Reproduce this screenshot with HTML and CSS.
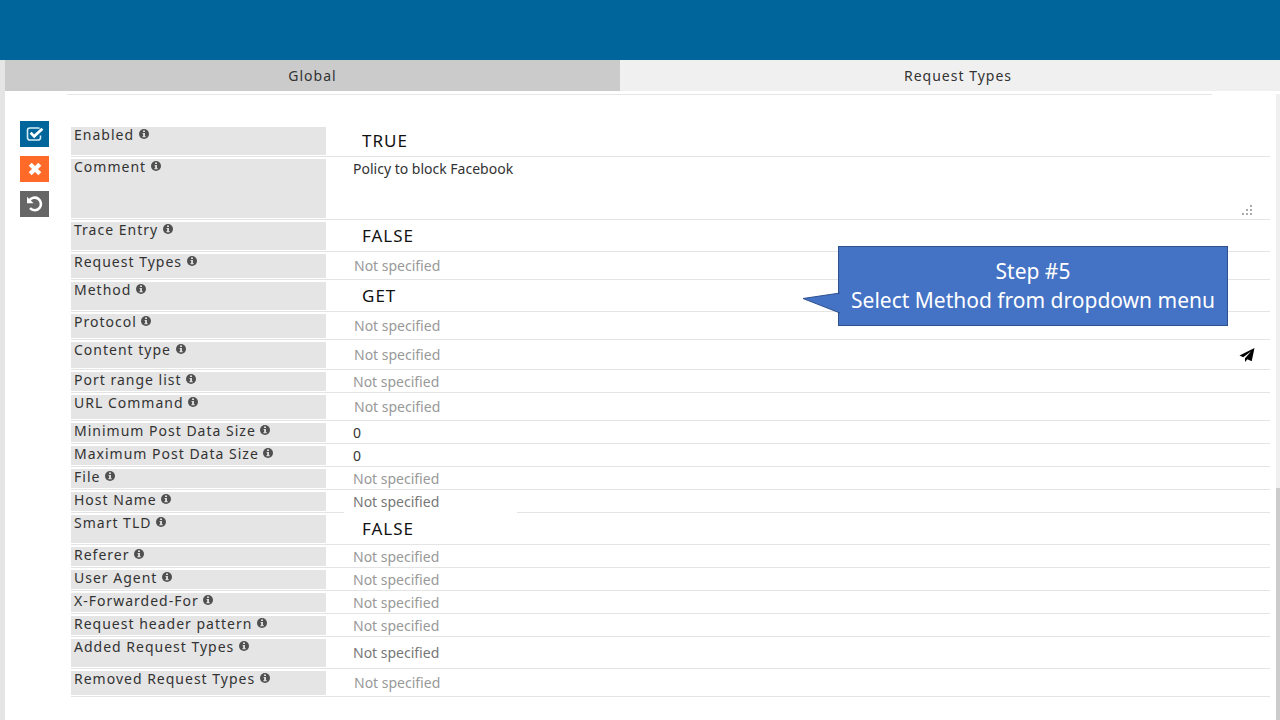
FILE: index.html
```html
<!DOCTYPE html>
<html lang="en">
<head>
  <meta charset="UTF-8" />
  <meta name="viewport" content="width=device-width, initial-scale=1.0"/>
  <title>Policy - Request Types</title>

  <link rel="stylesheet" href="styles.css">
</head>
<body>

  <!-- Shared icon -->
  <svg class="icon-defs" width="0" height="0" aria-hidden="true">
    <symbol id="info" viewBox="0 0 10 10">
      <circle cx="5" cy="5" r="5" fill="#505050"/>
      <path d="M4 1.6h2v1.4H4zM3.6 3.9H6v3.2h.6v1.1H3.5V7.1h.6V5h-.5z" fill="#dcdcdc"/>
    </symbol>
  </svg>

  <header class="top-bar"></header>

  <main class="page">
    <!-- Tabs -->
    <nav class="tabs">
      <button type="button" class="tab active">Global</button>
      <button type="button" class="tab">Request Types</button>
    </nav>

    <div class="content">
      <!-- Save / cancel / undo -->
      <div class="actions">
        <button type="button" class="action save" aria-label="Save">
          <svg width="20" height="18" viewBox="0 0 20 18" fill="none">
            <path d="M15.5 10.5v2.2a2.3 2.3 0 0 1-2.3 2.3H4.8a2.3 2.3 0 0 1-2.3-2.3V5.3A2.3 2.3 0 0 1 4.8 3h8.4q.8 0 1.4.4" stroke="#d5edf8" stroke-width="1.6"/>
            <path d="M5.6 7.8l3.6 3.6 8.2-7.6" stroke="#fff" stroke-width="2.8"/>
          </svg>
        </button>
        <button type="button" class="action cancel" aria-label="Cancel">
          <svg width="16" height="16" viewBox="0 0 16 16">
            <path d="M3.2 3.2l9.6 9.6M12.8 3.2l-9.6 9.6" stroke="#fff" stroke-width="4.2"/>
          </svg>
        </button>
        <button type="button" class="action undo" aria-label="Undo">
          <svg width="18" height="18" viewBox="0 0 18 18" fill="none">
            <path d="M3.2 5.8A6.3 6.3 0 1 1 4 13.2" stroke="#fff" stroke-width="2.6"/>
            <path d="M1 1.8v6.4h6.6z" fill="#fff"/>
          </svg>
        </button>
      </div>

      <!-- Policy form -->
      <form class="policy-form">
        <div class="row row-select">
          <label for="enabled">Enabled <svg class="info"><use href="#info"/></svg></label>
          <select id="enabled"><option>TRUE</option><option>FALSE</option></select>
        </div>
        <div class="row row-comment">
          <label for="comment">Comment <svg class="info"><use href="#info"/></svg></label>
          <textarea id="comment">Policy to block Facebook</textarea>
          <svg class="grip" width="12" height="10" viewBox="0 0 12 10" fill="#aaa">
            <path d="M9 0h2v2H9zM5 4h2v2H5zM9 4h2v2H9zM1 8h2v2H1zM5 8h2v2H5zM9 8h2v2H9z"/>
          </svg>
        </div>
        <div class="row row-select">
          <label for="trace">Trace Entry <svg class="info"><use href="#info"/></svg></label>
          <select id="trace"><option>FALSE</option><option>TRUE</option></select>
        </div>
        <div class="row row-list">
          <label for="requestTypes">Request Types <svg class="info"><use href="#info"/></svg></label>
          <input type="text" id="requestTypes" placeholder="Not specified" />
        </div>
        <div class="row row-select">
          <label for="method">Method <svg class="info"><use href="#info"/></svg></label>
          <select id="method"><option>GET</option><option>POST</option></select>
        </div>
        <div class="row row-list">
          <label for="protocol">Protocol <svg class="info"><use href="#info"/></svg></label>
          <input type="text" id="protocol" placeholder="Not specified" />
        </div>
        <div class="row row-send">
          <label for="contentType">Content type <svg class="info"><use href="#info"/></svg></label>
          <input type="text" id="contentType" placeholder="Not specified" />
          <button type="button" class="send" aria-label="Send">
            <svg width="16" height="14" viewBox="0 0 16 14">
              <path d="M15.5 0L.5 7.6l3.7 1.7L12.2 3.2 6 10.2V14l2.4-2.8 4.3 2.1z" fill="#000"/>
            </svg>
          </button>
        </div>
        <div class="row">
          <label for="portRange">Port range list <svg class="info"><use href="#info"/></svg></label>
          <input type="text" id="portRange" placeholder="Not specified" />
        </div>
        <div class="row row-list">
          <label for="urlCommand">URL Command <svg class="info"><use href="#info"/></svg></label>
          <input type="text" id="urlCommand" placeholder="Not specified" />
        </div>
        <div class="row">
          <label for="minPost">Minimum Post Data Size <svg class="info"><use href="#info"/></svg></label>
          <input type="text" id="minPost" value="0" />
        </div>
        <div class="row">
          <label for="maxPost">Maximum Post Data Size <svg class="info"><use href="#info"/></svg></label>
          <input type="text" id="maxPost" value="0" />
        </div>
        <div class="row">
          <label for="file">File <svg class="info"><use href="#info"/></svg></label>
          <input type="text" id="file" placeholder="Not specified" />
        </div>
        <div class="row">
          <label for="hostName">Host Name <svg class="info"><use href="#info"/></svg></label>
          <input type="text" id="hostName" class="dark" placeholder="Not specified" />
        </div>
        <div class="row row-select row-smart">
          <label for="smartTld">Smart TLD <svg class="info"><use href="#info"/></svg></label>
          <select id="smartTld"><option>FALSE</option><option>TRUE</option></select>
        </div>
        <div class="row">
          <label for="referer">Referer <svg class="info"><use href="#info"/></svg></label>
          <input type="text" id="referer" placeholder="Not specified" />
        </div>
        <div class="row">
          <label for="userAgent">User Agent <svg class="info"><use href="#info"/></svg></label>
          <input type="text" id="userAgent" placeholder="Not specified" />
        </div>
        <div class="row">
          <label for="forwardedFor">X-Forwarded-For <svg class="info"><use href="#info"/></svg></label>
          <input type="text" id="forwardedFor" placeholder="Not specified" />
        </div>
        <div class="row">
          <label for="headerPattern">Request header pattern <svg class="info"><use href="#info"/></svg></label>
          <input type="text" id="headerPattern" placeholder="Not specified" />
        </div>
        <div class="row row-added">
          <label for="addedTypes">Added Request Types <svg class="info"><use href="#info"/></svg></label>
          <input type="text" id="addedTypes" class="dark" placeholder="Not specified" />
        </div>
        <div class="row row-list">
          <label for="removedTypes">Removed Request Types <svg class="info"><use href="#info"/></svg></label>
          <input type="text" id="removedTypes" placeholder="Not specified" />
        </div>
      </form>

      <div class="scrollbar"><div class="thumb"></div></div>
    </div>
  </main>

  <!-- Step callout -->
  <div class="callout">
    <svg class="callout-tip" width="38" height="22" viewBox="0 0 38 22">
      <path d="M38 1L1 6.5L38 21" fill="#4472c4" stroke="#2f528f"/>
    </svg>
    <p>Step #5</p>
    <p>Select Method from dropdown menu</p>
  </div>

</body>
</html>
```

FILE: styles.css
```css
* {
  box-sizing: border-box;
}

body {
  margin: 0;
  min-height: 100vh;
  display: flex;
  flex-direction: column;
  position: relative;
  font-family: "Noto Sans", "Open Sans", sans-serif;
  font-size: 14px;
  color: #333;
  background: #fff;
}

button,
input,
select,
textarea {
  font: inherit;
  color: inherit;
  border: none;
  border-radius: 0;
  background: none;
  margin: 0;
  padding: 0;
  outline: none;
}

button {
  cursor: pointer;
}

.icon-defs {
  position: absolute;
}

.top-bar {
  height: 60px;
  background: #00659b;
}

.page {
  flex: 1;
  display: flex;
  flex-direction: column;
  border-left: 5px solid #e5e5e5;
}

/* Tabs */
.tabs {
  display: flex;
}

.tab {
  flex: 1 1 660px;
  height: 31px;
  padding-left: 16px;
  letter-spacing: 1px;
  background: #f0f0f0;
}

.tab.active {
  flex-basis: 615px;
  padding-left: 0;
  background: #cbcbcb;
}

.content {
  flex: 1;
  display: flex;
  padding-top: 3px;
}

/* Left action buttons */
.actions {
  display: flex;
  flex-direction: column;
  gap: 9px;
  width: 62px;
  padding: 27px 0 0 15px;
}

.action {
  width: 29px;
  height: 26px;
  display: flex;
  align-items: center;
  justify-content: center;
}

.save {
  background: #00659b;
}

.cancel {
  background: #ff6a29;
}

.undo {
  background: #666;
}

/* Form rows */
.policy-form {
  flex: 1;
  padding: 31px 6px 0 4px;
  background: linear-gradient(#e6e6e6, #e6e6e6) 0 0 / calc(100% - 64px) 1px no-repeat;
}

.row {
  display: flex;
  min-height: 23px;
  border-bottom: 1px solid #e4e4e4;
}

.row label {
  flex: none;
  width: 255px;
  margin: 2px 0 1px;
  padding-left: 3px;
  line-height: 15px;
  letter-spacing: 1px;
  background: #e5e5e5;
}

.info {
  width: 10px;
  height: 10px;
  vertical-align: 1px;
}

.row input,
.row textarea {
  flex: 1;
  min-width: 0;
  padding-left: 27px;
}

.row input::placeholder {
  color: #999;
  opacity: 1;
}

.row input.dark::placeholder {
  color: #777;
}

.row select {
  appearance: none;
  width: 173px;
  margin-left: 18px;
  padding-left: 18px;
  font-size: 17px;
  letter-spacing: 1px;
  color: #111;
  background: #fff;
}

.row-select,
.row-added {
  min-height: 32px;
}

.row-list {
  min-height: 28px;
}

.row-list input,
.row-send input {
  padding-left: 28px;
}

.row-send {
  min-height: 30px;
}

.row-comment {
  min-height: 63px;
}

.row-comment textarea {
  padding-top: 3px;
  line-height: 18px;
  resize: none;
}

.grip {
  align-self: flex-end;
  margin: 0 17px 4px 0;
}

.send {
  margin-right: 15px;
  display: flex;
  align-items: center;
}

/* The field covers the line above it */
.row-smart select {
  margin-top: -1px;
}

/* Scrollbar */
.scrollbar {
  width: 4px;
  display: flex;
  flex-direction: column;
  justify-content: flex-end;
  background: #f0f0f0;
}

.thumb {
  height: 37%;
  background: #cbcbcb;
}

/* Callout */
.callout {
  position: absolute;
  top: 246px;
  right: 52px;
  min-width: 390px;
  padding: 10px 11px;
  border: 1px solid #2f528f;
  background: #4472c4;
  color: #fff;
  font-family: "Noto Sans", "Open Sans", sans-serif;
  font-size: 21px;
  line-height: 29px;
  text-align: center;
}

.callout p {
  margin: 0;
}

.callout-tip {
  position: absolute;
  left: -37px;
  top: 45px;
}
```
